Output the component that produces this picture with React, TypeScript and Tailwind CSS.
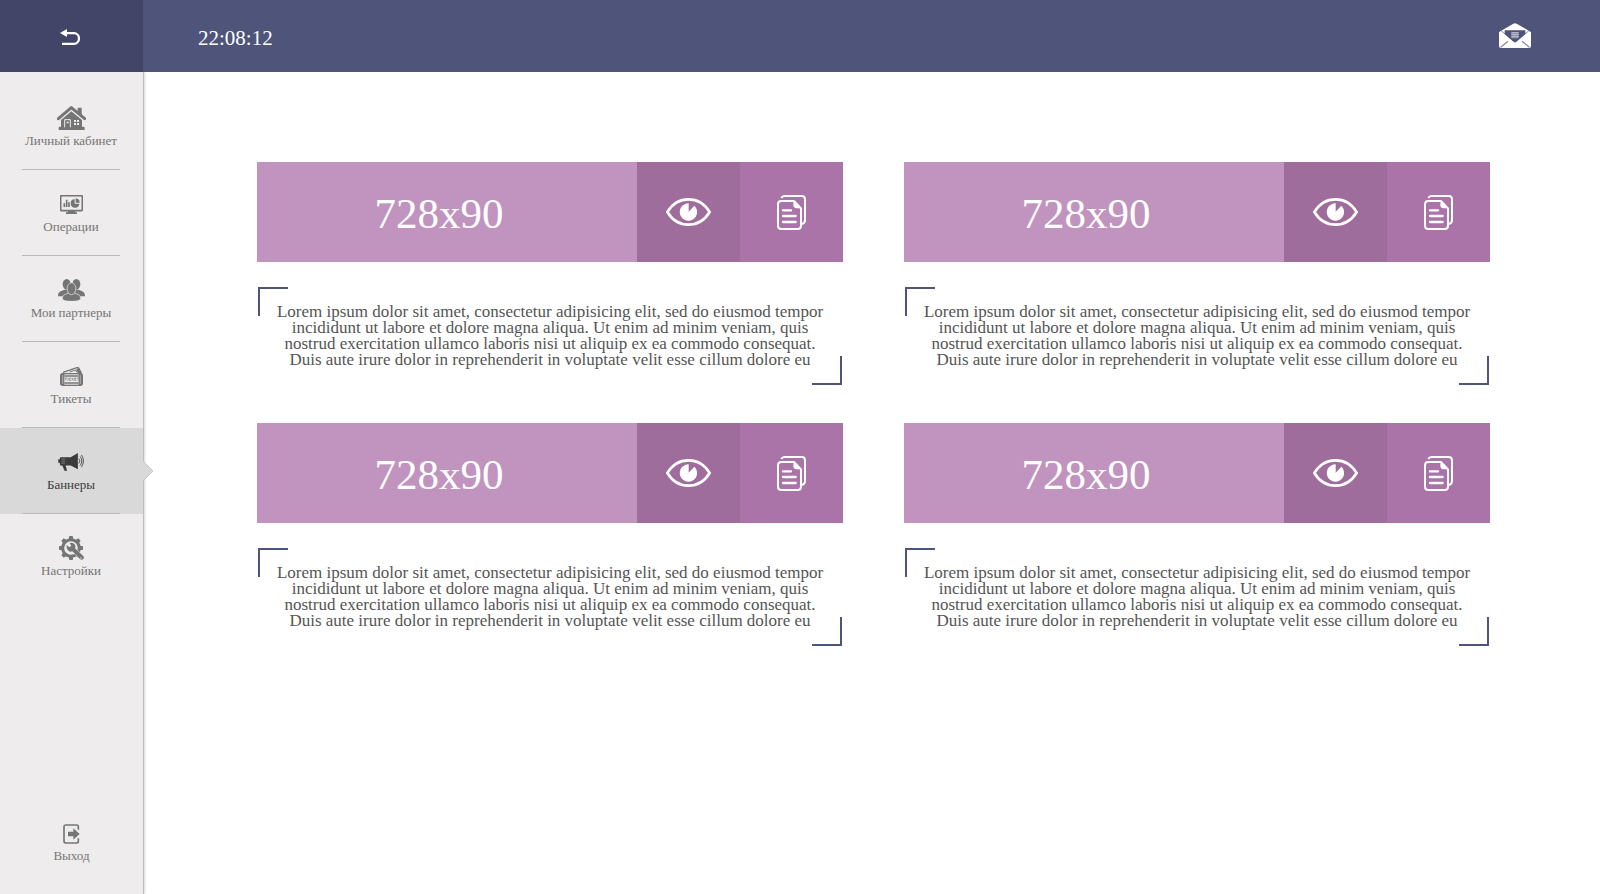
import type { ReactNode } from 'react';

function ReturnIcon() {
  return (
    <svg viewBox="0 0 60 48" className="h-4 w-5" aria-hidden="true">
      <path d="M0 12 21 0v24z" fill="#fff" />
      <path d="M16 12.5H42a15 16 0 0 1 0 32H6" fill="none" stroke="#fff" strokeWidth="7" />
    </svg>
  );
}

function EnvelopeIcon() {
  return (
    <svg viewBox="0 0 96 75" className="h-[25px] w-8" aria-hidden="true">
      <path d="M0 27 43 2q5-3 10 0l43 25v42q0 6-6 6H6q-6 0-6-6z" fill="#fff" />
      <path d="M0 26 5 22 48 58 91 22l5 4" fill="none" stroke="#4f547a" strokeWidth="2" />
      <path d="M17 22h62v11L54 55q-6 5-12 0L17 33z" fill="#4f547a" />
      <path d="M37 27h22v19H37z" fill="#8e91ad" />
      <path d="M37 29h22M37 35h22M37 41h22" stroke="#b9bbcd" strokeWidth="3" />
      <path d="M5 73 27 55M91 73 69 55" stroke="#8a8dab" strokeWidth="4" />
    </svg>
  );
}

function HomeIcon() {
  return (
    <svg viewBox="0 0 87 72" className="h-6 w-[29px]" aria-hidden="true">
      <path d="M62 5h12v28L62 22z" fill="currentColor" />
      <path d="M4 38 43 5l40 33" fill="none" stroke="currentColor" strokeWidth="9" strokeLinecap="round" strokeLinejoin="round" />
      <path d="M43 16 75 42v20h5q3 0 3 4v6H5v-6q0-4 3-4h4V42z" fill="currentColor" />
      <path d="M23 64V41h17v23" fill="none" stroke="#eeecec" strokeWidth="3" />
      <path d="M29 47h6v5h-6zM51 42h6v6h-6zM60 42h6v6h-6zM51 51h6v6h-6zM60 51h6v6h-6z" fill="#eeecec" />
    </svg>
  );
}

function MonitorIcon() {
  return (
    <svg viewBox="0 0 69 57" className="h-[19px] w-[23px]" aria-hidden="true">
      <rect x="2" y="2" width="65" height="45" rx="3" fill="none" stroke="currentColor" strokeWidth="5" />
      <path d="M25 48h19l2 4h5v5H18v-5h5z" fill="currentColor" />
      <path d="M13 36V25M20 36V14M27 36V22" stroke="currentColor" strokeWidth="5" />
      <path d="M44 12v14h14a13 13 0 1 1-14-14z" fill="currentColor" />
      <path d="M47 10a13 13 0 0 1 12 13H47z" fill="currentColor" />
    </svg>
  );
}

function PeopleIcon() {
  return (
    <svg viewBox="0 0 81 66" className="h-[22px] w-[27px]" aria-hidden="true">
      <g fill="currentColor">
        <ellipse cx="26" cy="16" rx="12" ry="16" />
        <ellipse cx="55" cy="16" rx="12" ry="16" />
        <path d="M0 52q0-13 10-16l9-4h14v20zM81 52q0-13-10-16l-9-4H48v20z" />
      </g>
      <g fill="currentColor" stroke="#eeecec" strokeWidth="2">
        <path d="M13 58q0-11 11-13l9-3h15l9 3q11 2 11 13 0 9-27.500 9T13 58z" />
        <ellipse cx="40.500" cy="29" rx="13" ry="18" />
      </g>
    </svg>
  );
}

function TicketIcon() {
  return (
    <svg viewBox="0 0 69 57" className="h-[19px] w-[23px]" aria-hidden="true">
      <path d="M9 16 51 2q5-1 6 3l7 13" fill="none" stroke="currentColor" strokeWidth="4" />
      <path d="M55 3 66 20H56L48 8z" fill="currentColor" />
      <path d="M29 15 46 9l6 8" fill="none" stroke="currentColor" strokeWidth="3" />
      <rect x="0" y="18" width="69" height="39" rx="8" fill="currentColor" />
      <path d="M13 22h43v31H13z" fill="#eeecec" />
      <path d="M13 27h43M13 48h43" stroke="currentColor" strokeWidth="4" />
      <path d="M8 24v27M61 24v27" stroke="#c9c8c8" strokeWidth="2" />
      <path d="M14 33h7M17.500 33v8M24 32v9M33 33h-5v7h5M36 32v9M41 32l-4 4 4 5M49 33h-5v7h5M44 36.500h4M51 33h6M54 33v8" fill="none" stroke="currentColor" strokeWidth="2" />
    </svg>
  );
}

function MegaphoneIcon() {
  return (
    <svg viewBox="0 0 78 55" className="h-[18px] w-[26px]" aria-hidden="true">
      <path d="M24 13h14L60 0v50L38 38H24z" fill="currentColor" />
      <path d="M8 13h17v25H8q-3 0-3-4v-4H0V19h5v-3q0-3 3-3z" fill="currentColor" />
      <path d="M12 37h10l5 17h-8z" fill="currentColor" />
      <path d="M10 19h11M10 25h11M10 31h11" stroke="#999" strokeWidth="2" />
      <path d="M63 17q6 7 0 15M67 11q10 13 0 27M71 6q12 18 0 37" fill="none" stroke="currentColor" strokeWidth="2.500" />
    </svg>
  );
}

const teeth = [0, 45, 90, 135, 180, 225, 270, 315];

function SettingsIcon() {
  return (
    <svg viewBox="0 0 75 75" className="h-[25px] w-[25px]" aria-hidden="true">
      <circle cx="36" cy="36" r="25" fill="none" stroke="currentColor" strokeWidth="9" />
      {teeth.map((angle) => (
        <path key={angle} d="M29 9l2-9h10l2 9z" fill="currentColor" transform={`rotate(${angle} 36 36)`} />
      ))}
      <path d="M40 38 72 68" stroke="#eeecec" strokeWidth="15" />
      <path
        d="M23 27l8 7 6-5-5-8q10-3 15 4 4 6 1 12l24 22q5 5 1 10-5 5-10 0L40 46q-9 3-14-4-4-6-3-15z"
        fill="currentColor"
      />
      <circle cx="66" cy="66" r="2" fill="#eeecec" />
    </svg>
  );
}

function ExitIcon() {
  return (
    <svg viewBox="0 0 51 60" className="h-5 w-[17px]" aria-hidden="true">
      <path d="M46 17V7q0-4-5-4H7Q3 3 3 8v44q0 5 5 5h33q5 0 5-5V43" fill="none" stroke="currentColor" strokeWidth="5" />
      <path d="M15 23h16V13l19 17-19 17V37H15z" fill="currentColor" />
    </svg>
  );
}

function EyeIcon() {
  return (
    <svg viewBox="0 0 135 84" className="h-7 w-[45px]" aria-hidden="true">
      <path
        d="M4 42C20 16 42 4 67.500 4S115 16 131 42C115 68 93 80 67.500 80S20 68 4 42z"
        fill="none"
        stroke="#fff"
        strokeWidth="8"
        strokeLinejoin="round"
      />
      <path d="M68 16v25l17-18a26 26 0 1 1-17-7z" fill="#fff" />
    </svg>
  );
}

function DocumentsIcon() {
  return (
    <svg viewBox="0 0 87 105" className="h-[35px] w-[29px]" aria-hidden="true">
      <path d="M13 9q3-6 9-6h52q10 0 10 10v62q0 10-9 12" fill="none" stroke="#fff" strokeWidth="6" />
      <path d="M51 18H13Q3 18 3 28v64q0 10 10 10h49q10 0 10-10V40z" fill="none" stroke="#fff" strokeWidth="6" strokeLinejoin="round" />
      <path d="M50 16 74 40H58q-9-1-9-10z" fill="#fff" />
      <path d="M18 46h24M18 63h38M18 81h38" stroke="#fff" strokeWidth="7" strokeLinecap="round" />
    </svg>
  );
}

const navItems: { label: string; icon: ReactNode; active?: boolean }[] = [
  { label: 'Личный кабинет', icon: <HomeIcon /> },
  { label: 'Операции', icon: <MonitorIcon /> },
  { label: 'Мои партнеры', icon: <PeopleIcon /> },
  { label: 'Тикеты', icon: <TicketIcon /> },
  { label: 'Баннеры', icon: <MegaphoneIcon />, active: true },
  { label: 'Настройки', icon: <SettingsIcon /> },
];

function NavLink({ label, icon, active, last }: { label: string; icon: ReactNode; active?: boolean; last?: boolean }) {
  return (
    <li className={active ? 'relative bg-[#d9d9d9] text-[#3a3a3a]' : 'text-[#757575]'}>
      <a href="#" aria-current={active ? 'page' : undefined} className="flex h-[86px] flex-col items-center pr-px">
        <span className="mt-[21px] flex h-[26px] items-center justify-center">{icon}</span>
        <span className="text-[13px] leading-5 whitespace-nowrap">{label}</span>
        {!last && <span className="mt-auto h-px w-[98px] bg-[#bababa]" />}
      </a>
      {active && (
        <svg viewBox="0 0 12 24" className="absolute top-[31px] left-full h-6 w-3" aria-hidden="true">
          <path d="M0 2 10 12 0 22" fill="#d9d9d9" stroke="#c8c8c8" strokeWidth="1" />
        </svg>
      )}
    </li>
  );
}

function BannerCard({ size }: { size: string }) {
  return (
    <article>
      <div className="flex h-[100px] text-white">
        <h2 className="flex flex-1 items-center justify-center bg-[#c094be] pt-1 pr-4 text-[43px]">{size}</h2>
        <button type="button" aria-label="Просмотр" className="flex w-[103px] items-center justify-center bg-[#9f6d9b]">
          <EyeIcon />
        </button>
        <button type="button" aria-label="Копировать" className="flex w-[103px] items-center justify-center bg-[#aa74a9]">
          <DocumentsIcon />
        </button>
      </div>
      <div className="relative mx-px mt-[25px] pt-[17px] pb-[17px]">
        <span className="absolute top-0 left-0 h-[29px] w-[30px] border-t-2 border-l-2 border-[#4f547a]" />
        <p className="text-center text-[17px] leading-4 whitespace-nowrap text-[#555]">
          Lorem ipsum dolor sit amet, consectetur adipisicing elit, sed do eiusmod tempor
          <br />
          incididunt ut labore et dolore magna aliqua. Ut enim ad minim veniam, quis
          <br />
          nostrud exercitation ullamco laboris nisi ut aliquip ex ea commodo consequat.
          <br />
          Duis aute irure dolor in reprehenderit in voluptate velit esse cillum dolore eu
        </p>
        <span className="absolute right-0 bottom-0 h-[29px] w-[30px] border-r-2 border-b-2 border-[#4f547a]" />
      </div>
    </article>
  );
}

const banners = ['728x90', '728x90', '728x90', '728x90'];

export default function App() {
  return (
    <div className="flex min-h-screen flex-col bg-white font-['Liberation_Serif',serif]">
      <header className="relative z-10 flex h-[72px] items-stretch bg-[#4f547a] text-white">
        <button type="button" aria-label="Назад" className="flex w-[143px] items-center justify-center bg-[#434568] pt-0.5 pr-1">
          <ReturnIcon />
        </button>
        <time className="ml-[55px] self-center pt-1.5 text-[21px]">22:08:12</time>
        <button type="button" aria-label="Сообщения" className="mr-[69px] mb-0.5 ml-auto self-center">
          <EnvelopeIcon />
        </button>
      </header>
      <div className="flex flex-1">
        <nav className="flex w-36 shrink-0 flex-col border-r border-[#bcbcbc] bg-[#eeecec] pt-3 shadow-[1px_0_2px_#d8d8d8]">
          <ul>
            {navItems.map((item, i) => (
              <NavLink key={item.label} {...item} last={i === navItems.length - 1} />
            ))}
          </ul>
          <a href="#" className="mt-auto mb-7 flex flex-col items-center gap-0.5 text-[#757575]">
            <ExitIcon />
            <span className="text-[13px] leading-5">Выход</span>
          </a>
        </nav>
        <main className="grid flex-1 grid-cols-1 content-start gap-x-[61px] gap-y-[38px] pt-[90px] pr-[110px] pb-10 pl-[113px] xl:grid-cols-2">
          {banners.map((size, i) => (
            <BannerCard key={i} size={size} />
          ))}
        </main>
      </div>
    </div>
  );
}
